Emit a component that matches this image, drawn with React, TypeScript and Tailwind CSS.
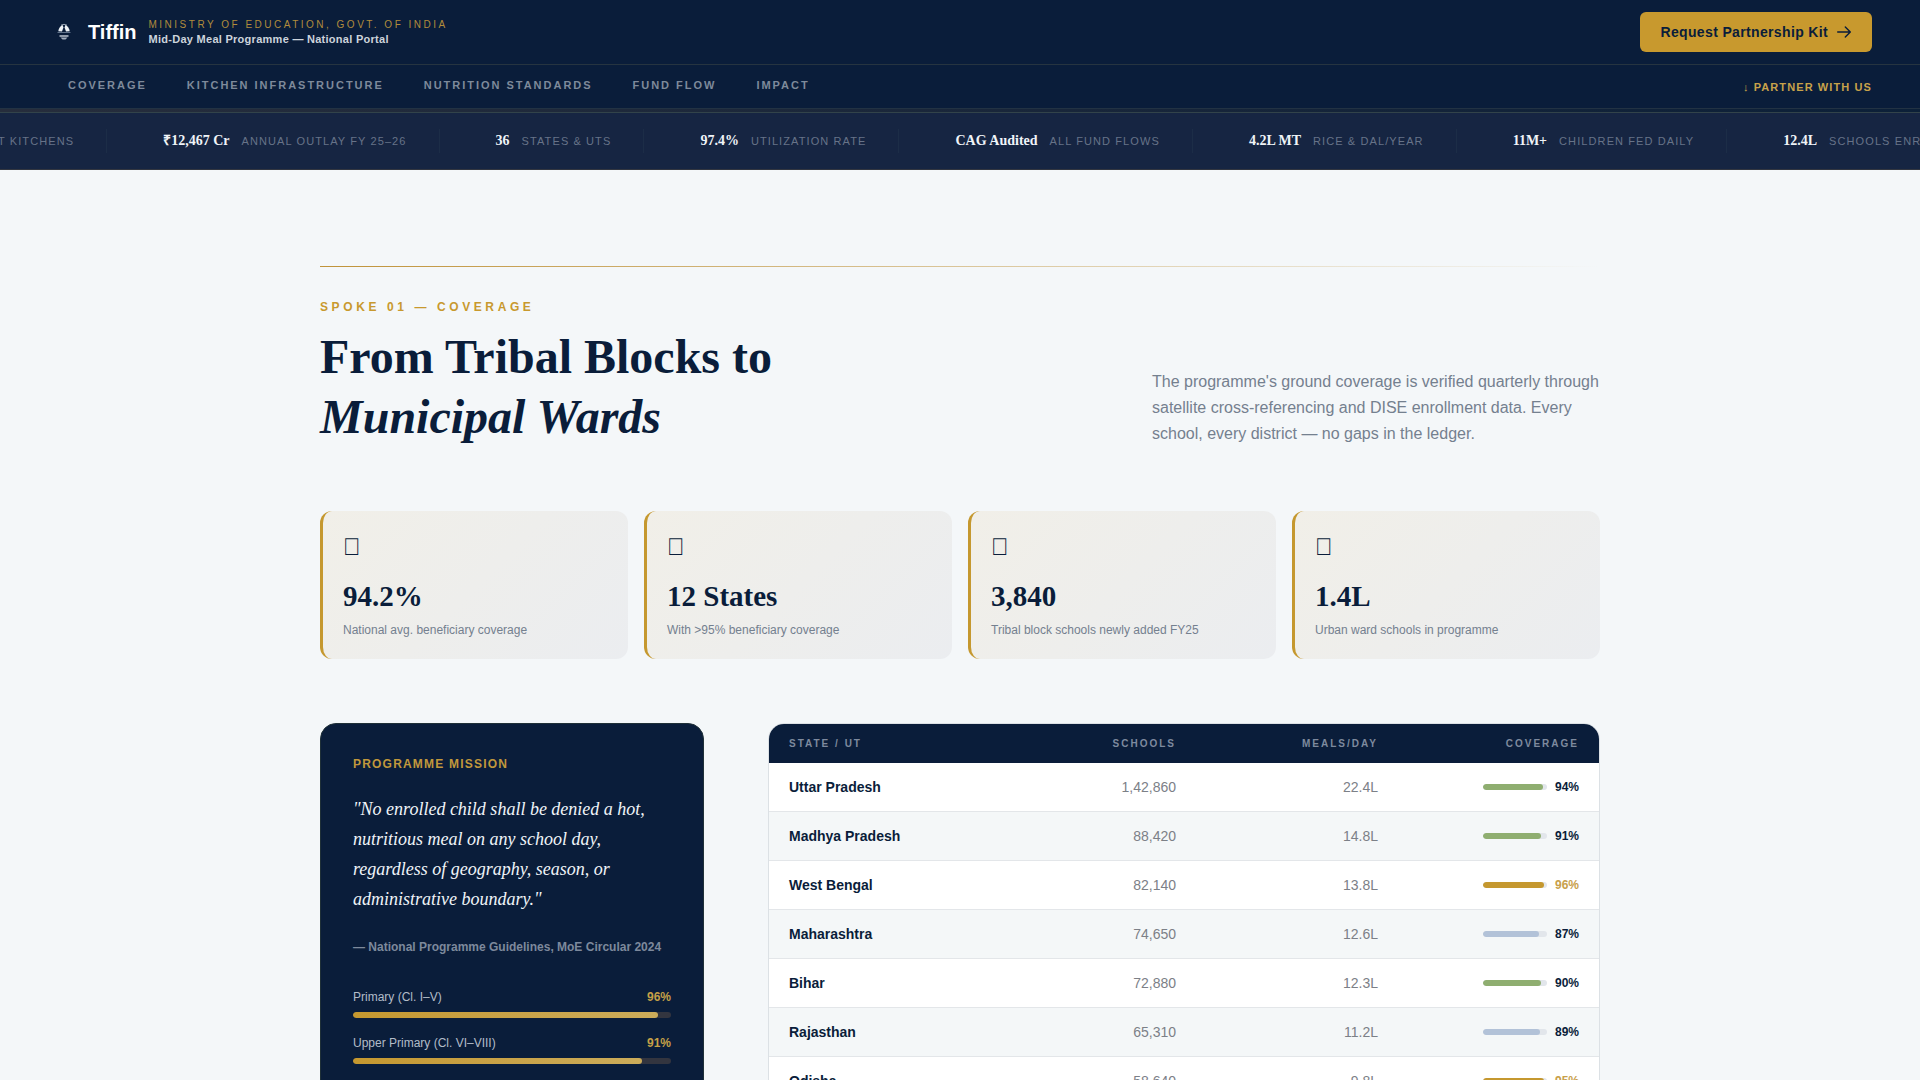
import React from 'react';

const navLinks = ['Coverage', 'Kitchen Infrastructure', 'Nutrition Standards', 'Fund Flow', 'Impact'];

const tickerItems = [
  { value: '', label: 'T Kitchens' },
  { value: '₹12,467 Cr', label: 'Annual Outlay FY 25–26' },
  { value: '36', label: 'States & UTs' },
  { value: '97.4%', label: 'Utilization Rate' },
  { value: 'CAG Audited', label: 'All Fund Flows' },
  { value: '4.2L MT', label: 'Rice & Dal/Year' },
  { value: '11M+', label: 'Children Fed Daily' },
  { value: '12.4L', label: 'Schools Enrolled' },
];

const stats = [
  { icon: '\uE000', value: '94.2%', label: 'National avg. beneficiary coverage' },
  { icon: '\uE001', value: '12 States', label: 'With >95% beneficiary coverage' },
  { icon: '\uE002', value: '3,840', label: 'Tribal block schools newly added FY25' },
  { icon: '\uE003', value: '1.4L', label: 'Urban ward schools in programme' },
];

const levels = [
  { label: 'Primary (Cl. I–V)', pct: 96 },
  { label: 'Upper Primary (Cl. VI–VIII)', pct: 91 },
];

const states = [
  { name: 'Uttar Pradesh', schools: '1,42,860', meals: '22.4L', pct: 94 },
  { name: 'Madhya Pradesh', schools: '88,420', meals: '14.8L', pct: 91 },
  { name: 'West Bengal', schools: '82,140', meals: '13.8L', pct: 96 },
  { name: 'Maharashtra', schools: '74,650', meals: '12.6L', pct: 87 },
  { name: 'Bihar', schools: '72,880', meals: '12.3L', pct: 90 },
  { name: 'Rajasthan', schools: '65,310', meals: '11.2L', pct: 89 },
  { name: 'Odisha', schools: '58,640', meals: '9.8L', pct: 95 },
];

const barColor = (pct: number) => {
  if (pct >= 95) return 'bg-[#c5982f]';
  if (pct >= 90) return 'bg-[#8fae70]';
  return 'bg-[#b2c2d8]';
};

function Emblem() {
  return (
    <svg width="32" height="32" viewBox="0 0 32 32" fill="none" aria-hidden="true">
      <path d="M13 9.2Q16 7.4 19 9.2" stroke="#9aa8b8" strokeWidth="1" />
      <path d="M14.6 9C12.2 10 10.6 12.400 10.3 15.200L14 15.400L15.400 11.500Z" fill="#eef3f7" />
      <path d="M17.400 9C19.800 10 21.400 12.400 21.700 15.200L18 15.400L16.600 11.500Z" fill="#eef3f7" />
      <path d="M9.5 16.500H22.5" stroke="#5f7189" strokeWidth="1" />
      <path d="M11.500 20H20.500" stroke="#c9d2dc" strokeWidth="1.400" />
      <path d="M12.5 21.6H19.5L17.500 23.500H14.500Z" fill="#a4b0bf" />
    </svg>
  );
}

function ArrowRight() {
  return (
    <svg
      width="16"
      height="16"
      viewBox="0 0 16 16"
      fill="none"
      stroke="currentColor"
      strokeWidth="1.4"
      strokeLinecap="round"
      strokeLinejoin="round"
      aria-hidden="true"
    >
      <path d="M1.700 8h12.500M9.300 3l5 5-5 5" />
    </svg>
  );
}

function Header() {
  return (
    <header className="bg-[#0a1d3a]">
      <div className="flex h-[65px] items-center justify-between border-b border-[#263440] px-12">
        <div className="flex items-center">
          <a href="#" className="flex items-center gap-2 text-xl font-bold text-white">
            <Emblem />
            Tiffin
          </a>
          <div className="ml-3">
            <p className="text-[10px] leading-[15px] tracking-[0.25em] text-[#b18c3c] uppercase">
              Ministry of Education, Govt. of India
            </p>
            <p className="text-[11px] leading-[15px] font-bold tracking-wide text-[#cdd4dc]">
              Mid-Day Meal Programme — National Portal
            </p>
          </div>
        </div>
        <button className="flex h-10 items-center gap-2 rounded-md bg-[#c8992e] px-5 text-sm font-bold tracking-wide text-[#0a1d3a]">
          Request Partnership Kit
          <ArrowRight />
        </button>
      </div>
      <div className="flex h-11 items-center justify-between border-b border-[#223243] px-12">
        <nav className="flex pb-1">
          {navLinks.map((link) => (
            <a
              key={link}
              href="#"
              className="px-5 text-[11px] leading-4 font-bold tracking-[0.18em] text-[#7e8a9b] uppercase"
            >
              {link}
            </a>
          ))}
        </nav>
        <a href="#" className="text-[11px] leading-4 font-bold tracking-widest text-[#c8a24a] uppercase">
          ↓ Partner with us
        </a>
      </div>
      <div className="h-[3px] bg-linear-to-r from-[#262d3c] to-[#0c2038]" />
    </header>
  );
}

function Ticker() {
  return (
    <div className="overflow-hidden border-t border-b border-t-[#32434a] border-b-[#323640] bg-[#162542] py-4">
      <div className="-ml-[70px] flex w-max">
        {tickerItems.map((item) => (
          <div key={item.label} className="flex h-6 items-center gap-3 border-r border-[#1c2d47] pr-8 pl-14">
            <span className="font-['Liberation_Serif',serif] text-sm font-bold whitespace-nowrap text-[#f0f4f8]">
              {item.value}
            </span>
            <span className="text-[11px] tracking-widest whitespace-nowrap text-[#677388] uppercase">{item.label}</span>
          </div>
        ))}
      </div>
    </div>
  );
}

function StatCard({ icon, value, label }: { icon: string; value: string; label: string }) {
  return (
    <div className="rounded-xl border-l-3 border-[#c5982f] bg-linear-135 from-[#f1efe8] to-[#ebedf0] p-5">
      <div className="text-2xl leading-8 text-[#0a1d3a]">{icon}</div>
      <div className="mt-4 font-['Liberation_Serif',serif] text-[29px] leading-[34px] font-bold text-[#0a1d3a]">
        {value}
      </div>
      <div className="mt-2 text-xs leading-[18px] text-[#74808f]">{label}</div>
    </div>
  );
}

function MissionPanel() {
  return (
    <div className="w-96 shrink-0 rounded-2xl border border-[#1f3038] bg-[#0a1d3a] p-8">
      <h3 className="text-xs leading-4 font-bold tracking-widest text-[#c1983c] uppercase">Programme Mission</h3>
      <blockquote className="mt-[22px] font-['Liberation_Serif',serif] text-[18px] leading-[30px] text-[#f0f4f8] italic">
        "No enrolled child shall be denied a hot, nutritious meal on any school day, regardless of geography, season, or
        administrative boundary."
      </blockquote>
      <p className="mt-6 text-xs leading-[18px] font-bold text-[#7d899c]">
        — National Programme Guidelines, MoE Circular 2024
      </p>
      <div className="mt-8 flex flex-col gap-4">
        {levels.map((level) => (
          <div key={level.label}>
            <div className="flex justify-between text-xs leading-[18px]">
              <span className="text-[#b3bcc8]">{level.label}</span>
              <span className="font-bold text-[#c5a047]">{level.pct}%</span>
            </div>
            <div className="mt-1.5 h-1.5 overflow-hidden rounded-full bg-[#33353f]">
              <div
                className="h-full rounded-full bg-linear-to-r from-[#c5982f] to-[#ccac5a]"
                style={{ width: `${level.pct}%` }}
              />
            </div>
          </div>
        ))}
      </div>
    </div>
  );
}

function StateTable() {
  return (
    <div className="flex-1 overflow-hidden rounded-2xl border border-[#dce1e5] bg-white">
      <table className="w-full table-fixed border-separate border-spacing-0 text-sm">
        <thead>
          <tr className="bg-[#0a1d3a] text-[10px] leading-[15px] tracking-[2px] text-[#7e8a9e] uppercase">
            <th className="px-5 py-3 text-left">State / UT</th>
            <th className="w-[201px] px-5 py-3 text-right">Schools</th>
            <th className="w-[202px] px-5 py-3 text-right">Meals/Day</th>
            <th className="w-[201px] px-5 py-3 text-right">Coverage</th>
          </tr>
        </thead>
        <tbody>
          {states.map((s) => (
            <tr key={s.name} className="h-[49px] even:bg-[#f4f7f8]">
              <td className="border-b border-[#e3e6e9] px-5 font-bold text-[#0a1d3a]">{s.name}</td>
              <td className="border-b border-[#e3e6e9] px-5 text-right text-[#7c8087]">{s.schools}</td>
              <td className="border-b border-[#e3e6e9] px-5 text-right text-[#7c8087]">{s.meals}</td>
              <td className="border-b border-[#e3e6e9] px-5">
                <div className="flex items-center justify-end gap-2">
                  <div className="h-1.5 w-16 overflow-hidden rounded-full bg-[#e2e6eb]">
                    <div className={`h-full rounded-full ${barColor(s.pct)}`} style={{ width: `${s.pct}%` }} />
                  </div>
                  <span className={`text-xs font-bold ${s.pct >= 95 ? 'text-[#c8a04a]' : 'text-[#0a1d3a]'}`}>
                    {s.pct}%
                  </span>
                </div>
              </td>
            </tr>
          ))}
        </tbody>
      </table>
    </div>
  );
}

export default function App() {
  return (
    <div className="min-h-screen bg-[#f4f7f9] font-['Liberation_Sans',sans-serif]">
      <Header />
      <Ticker />
      <main className="px-12 pt-24">
        <section className="mx-auto max-w-[1280px]">
          <div className="h-px bg-linear-to-r from-[#c0933a] to-transparent" />
          <p className="mt-8 text-xs leading-4 font-bold tracking-[0.3em] text-[#c8992e] uppercase">
            Spoke 01 — Coverage
          </p>
          <div className="mt-3 flex items-end justify-between">
            <h2 className="font-['Liberation_Serif',serif] text-5xl leading-[60px] font-bold text-[#0a1d3a]">
              From Tribal Blocks to
              <br />
              <em>Municipal Wards</em>
            </h2>
            <p className="w-full max-w-md text-base leading-[26px] text-[#74808f]">
              The programme's ground coverage is verified quarterly through satellite cross-referencing and DISE
              enrollment data. Every school, every district — no gaps in the ledger.
            </p>
          </div>

          {/* Headline numbers */}
          <div className="mt-16 grid grid-cols-4 gap-4">
            {stats.map((stat) => (
              <StatCard key={stat.label} {...stat} />
            ))}
          </div>

          <div className="mt-16 flex gap-16">
            <MissionPanel />
            <StateTable />
          </div>
        </section>
      </main>
    </div>
  );
}
